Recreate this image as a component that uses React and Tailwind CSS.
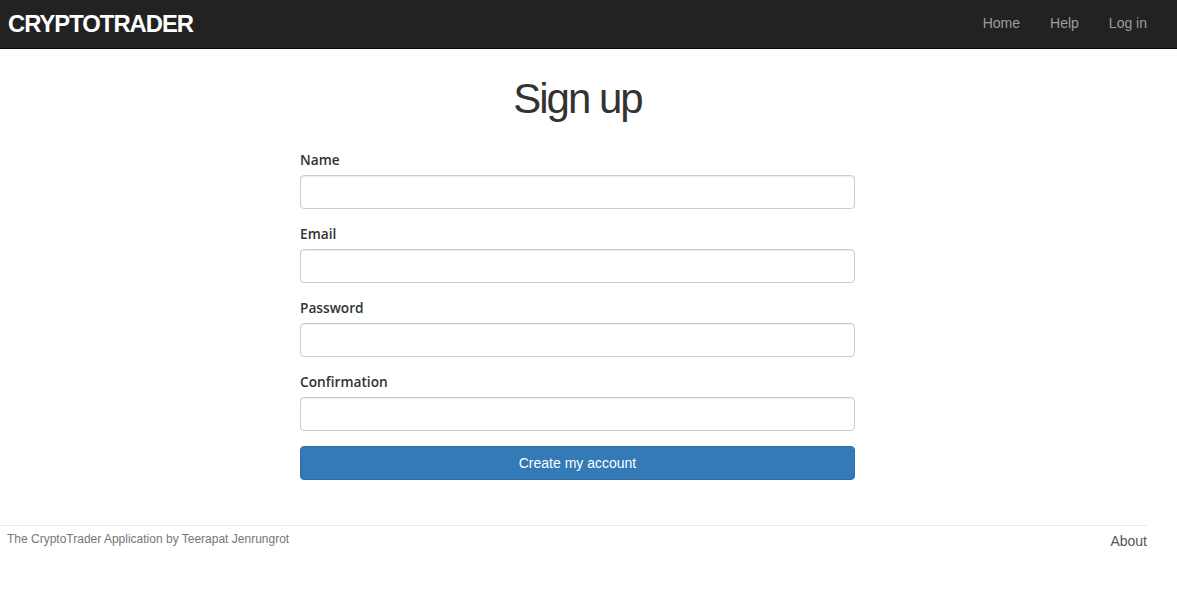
export default function App() {
  const fields = ["Name", "Email", "Password", "Confirmation"];
  return (
    <div className="min-h-[601px] bg-white" style={{ fontFamily: '"Liberation Sans", Arial, sans-serif' }}>
      <header className="h-[49px] bg-[#222222] border-b border-[#080808] flex items-center justify-between pl-[8px] pr-[15px]">
        <div className="text-white font-bold uppercase text-[23.8px] tracking-[-1px] leading-none">CryptoTrader</div>
        <nav className="flex items-center text-[14px] text-[#9d9d9d] -mt-[2px]">
          <a className="px-[15px] leading-[20px]">Home</a>
          <a className="px-[15px] leading-[20px]">Help</a>
          <a className="px-[15px] leading-[20px]">Log in</a>
        </nav>
      </header>
      <main className="w-[1155px] flex flex-col items-center">
        <h1 className="mt-[27px] mb-[28px] text-[42px] leading-[46px] tracking-[-2px] text-[#333333]">Sign up</h1>
        <form className="w-[555px] flex flex-col">
          {fields.map((f) => (
            <div key={f} className="flex flex-col">
              <label
                className="text-[13.7px] leading-[20px] font-semibold text-[#333333] mb-[5px]"
                style={{ fontFamily: '"Open Sans", sans-serif' }}
              >
                {f}
              </label>
              <input
                type={f === "Password" || f === "Confirmation" ? "password" : "text"}
                className="h-[34px] border border-[#cccccc] rounded-[4px] mb-[15px] px-3 shadow-[inset_0_1px_1px_rgba(0,0,0,0.075)] outline-none"
              />
            </div>
          ))}
          <button
            type="button"
            className="h-[34px] bg-[#337ab7] border border-[#2e6da4] rounded-[4px] text-white text-[14px]"
          >
            Create my account
          </button>
        </form>
      </main>
      <footer className="mt-[45px] mr-[30px] border-t border-[#eaeaea] pt-[5px] flex justify-between items-start">
        <small className="pl-[7px] text-[12px] leading-[17px] text-[#777777]">
          The CryptoTrader Application by Teerapat Jenrungrot
        </small>
        <a className="text-[14px] leading-[20px] text-[#555555]">About</a>
      </footer>
    </div>
  );
}
